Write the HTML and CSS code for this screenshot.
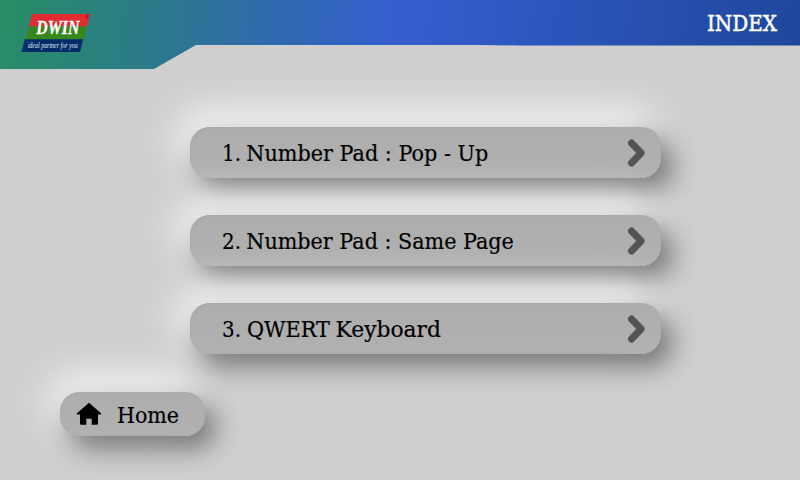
FILE: index.html
```
<!DOCTYPE html>
<html lang="en">
<head>
<meta charset="utf-8">
<title>Index</title>
<link rel="stylesheet" href="styles.css">
</head>
<body>
<header class="header">
  <svg class="logo" width="72" height="42" viewBox="0 0 72 42">
    <path fill="#e02b30" d="M11 1H69L65.8 13.5H7.7z"/>
    <path fill="#37871c" d="M7.7 13.5H65.8L62.5 26.3H4.2z"/>
    <path fill="#012c69" d="M3.8 26.3H62.2L59 39H.5z"/>
    <text class="brand" x="15.3" y="20.5" textLength="43" lengthAdjust="spacingAndGlyphs">DWIN</text>
    <text class="mark" x="63.7" y="6.2">®</text>
    <text class="tagline" x="6.7" y="34.7" textLength="50" lengthAdjust="spacingAndGlyphs">ideal partner for you</text>
  </svg>
  <h1 class="title"><svg width="76" height="36"><text x="3" y="25" textLength="70" lengthAdjust="spacingAndGlyphs">INDEX</text></svg></h1>
</header>
<main class="menu">
  <a class="item">
    <svg class="label" width="310" height="38"><text x="0" y="27" textLength="19" lengthAdjust="spacingAndGlyphs">1.</text><text x="24.3" y="27" textLength="242" lengthAdjust="spacingAndGlyphs">Number Pad : Pop - Up</text></svg>
    <svg class="chevron" width="20" height="30"><path d="M4.5 5L14.1 15L4.5 25"/></svg>
  </a>
  <a class="item">
    <svg class="label" width="310" height="38"><text x="0" y="27" textLength="19" lengthAdjust="spacingAndGlyphs">2.</text><text x="24.3" y="27" textLength="267.5" lengthAdjust="spacingAndGlyphs">Number Pad : Same Page</text></svg>
    <svg class="chevron" width="20" height="30"><path d="M4.5 5L14.1 15L4.5 25"/></svg>
  </a>
  <a class="item">
    <svg class="label" width="310" height="38"><text x="0" y="27" textLength="19" lengthAdjust="spacingAndGlyphs">3.</text><text x="25" y="27" textLength="83" lengthAdjust="spacingAndGlyphs">QWERT</text><text x="113.5" y="27" textLength="105.5" lengthAdjust="spacingAndGlyphs">Keyboard</text></svg>
    <svg class="chevron" width="20" height="30"><path d="M4.5 5L14.1 15L4.5 25"/></svg>
  </a>
</main>
<a class="home">
  <svg class="house" width="26" height="24" viewBox="0 0 26 24"><path d="M13 .8L25 11.2Q25.8 12.4 24.6 12.6H22V21.5Q22 22.8 20.7 22.8H15.7V16.8H10.3V22.8H5.3Q4 22.8 4 21.5V12.6H1.4Q.2 12.4 1 11.2z"/></svg>
  <svg class="home-label" width="70" height="34"><text x="0" y="26" textLength="62" lengthAdjust="spacingAndGlyphs">Home</text></svg>
</a>
</body>
</html>
```
FILE: styles.css
```
* { box-sizing: border-box; }
body {
  margin: 0;
  width: 800px;
  height: 480px;
  overflow: hidden;
  background: #cfcfcf;
  font-family: "Rockwell", "DejaVu Serif", serif;
  font-size: 21.5px;
}
svg { display: block; flex: none; overflow: visible; }
.header {
  display: flex;
  justify-content: space-between;
  align-items: flex-start;
  height: 69px;
  padding: 13px 20px 0 21px;
  background: linear-gradient(97deg, #278e65 0%, #2b7c86 17%, #3069b0 35%, #355fcf 49%, #2b54b9 72%, #1e479b 100%);
  clip-path: polygon(0 0, 800px 0, 800px 45.5px, 520px 45.5px, 480px 45px, 196px 45px, 154px 69px, 0 69px);
}
.brand { font: italic bold 18px "Liberation Serif", serif; fill: #fff; stroke: #fff; stroke-width: .3; }
.mark { font: 6px "Liberation Sans", sans-serif; fill: #611; }
.tagline { font: italic 7.5px "Liberation Serif", serif; fill: #e5ebf5; }
.title { margin: -7px 0 0; font-size: 21.5px; font-weight: 400; }
.title text { fill: #fff; stroke: #fff; stroke-width: .5; }
.label text, .home-label text { stroke: #000; stroke-width: .2; }
.menu {
  display: flex;
  flex-direction: column;
  gap: 37px;
  width: 471px;
  margin: 58px 0 0 190px;
}
.item, .home {
  display: flex;
  align-items: center;
  background: linear-gradient(#adadad, #b1b1b1);
  border-radius: 20px;
  box-shadow: 10px 12px 27px rgba(0, 0, 0, .46), -9px -13px 42px rgba(255, 255, 255, .98), inset 0 0 1px #999;
}
.item {
  justify-content: space-between;
  height: 51px;
  padding: 0 14px 0 32px;
}
.chevron path {
  fill: none;
  stroke: #535353;
  stroke-width: 7;
  stroke-linecap: round;
  stroke-linejoin: round;
}
.home {
  width: 145px;
  height: 44px;
  margin: 38px 0 0 60px;
  padding-left: 16px;
  gap: 15px;
}
```
